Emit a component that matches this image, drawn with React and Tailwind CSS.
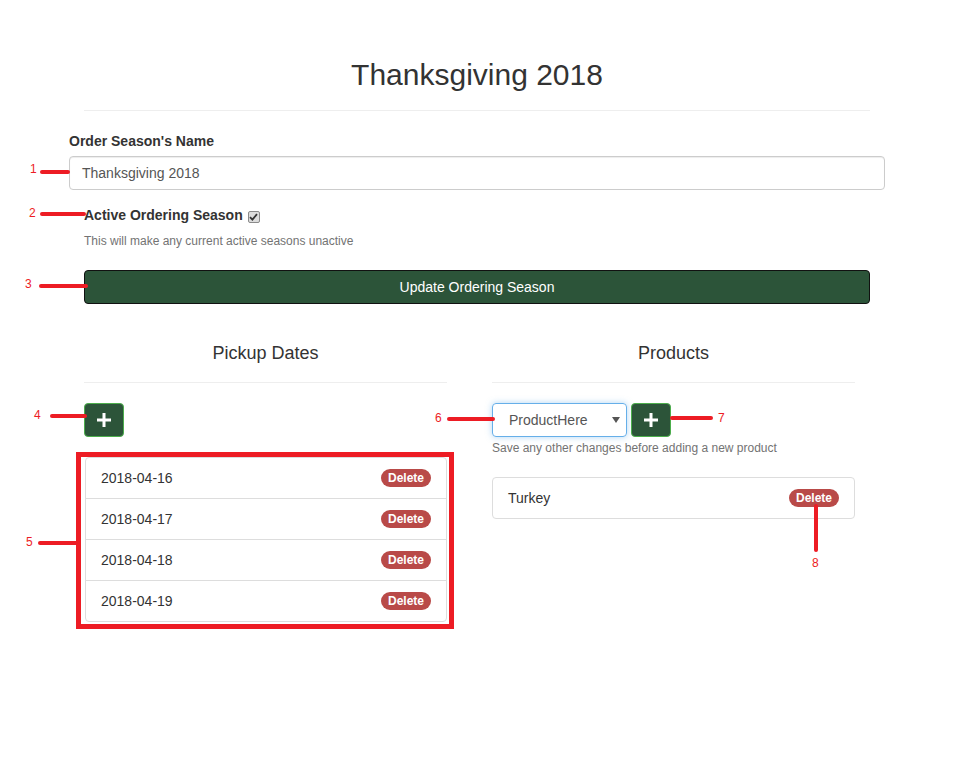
import React from "react";

const dates = ["2018-04-16", "2018-04-17", "2018-04-18", "2018-04-19"];

function PlusIcon() {
  return (
    <svg width="14" height="14" viewBox="0 0 14 14">
      <rect x="5.5" y="0" width="3" height="14" fill="#fff" />
      <rect x="0" y="5.5" width="14" height="3" fill="#fff" />
    </svg>
  );
}

function AddButton() {
  return (
    <button className="w-[40px] h-[34px] rounded-[4px] bg-[#2c5439] border border-[#4cae4c] flex items-center justify-center">
      <PlusIcon />
    </button>
  );
}

function Badge() {
  return (
    <span className="inline-block rounded-[10px] bg-[#b94a48] text-white text-[12px] font-bold leading-[12px] px-[7px] py-[3px]">
      Delete
    </span>
  );
}

function Item({ label, first, last }) {
  return (
    <div
      className={[
        "flex items-center justify-between h-[42px] px-[15px] border border-[#ddd] bg-white -mb-px",
        first ? "rounded-t-[4px]" : "",
        last ? "rounded-b-[4px]" : "",
      ].join(" ")}
    >
      <span className="text-[14px] text-[#333]">{label}</span>
      <Badge />
    </div>
  );
}

// red callout markers drawn over the screenshot
function Num({ n, className }) {
  return (
    <span className={"absolute text-[12px] leading-[12px] text-[#ed1c24] " + className}>
      {n}
    </span>
  );
}

function Line({ className }) {
  return <div className={"absolute bg-[#ed1c24] rounded-full " + className} />;
}

export default function App() {
  return (
    <div
      className="relative w-[974px] h-[760px] bg-white text-[#333] overflow-hidden"
      style={{ fontFamily: '"Liberation Sans", Arial, sans-serif' }}
    >
      <div className="pt-[58px] ml-[84px] w-[786px]">
        <h2 className="text-[30px] leading-[33px] text-center">Thanksgiving 2018</h2>
        <div className="mt-[19px] border-t border-[#eee]" />

        <label className="block mt-[20px] text-[14px] leading-[20px] font-bold -ml-[15px]">
          Order Season's Name
        </label>
        <div className="mt-[5px] -mx-[15px] h-[34px] border border-[#ccc] rounded-[4px] px-[12px] flex items-center text-[14px] text-[#555] shadow-[inset_0_1px_1px_rgba(0,0,0,0.075)]">
          Thanksgiving 2018
        </div>

        <div className="mt-[15px] flex items-center gap-[5px] h-[20px]">
          <span className="text-[14px] font-bold">Active Ordering Season</span>
          <span className="mt-[3px] w-[12px] h-[12px] rounded-[2px] border border-[#8a8a8a] bg-[#dcdcdc] flex items-center justify-center">
            <svg width="9" height="8" viewBox="0 0 9 8">
              <path d="M1 4.2 L3.4 6.6 L8 1.2" stroke="#333" strokeWidth="1.8" fill="none" />
            </svg>
          </span>
        </div>
        <div className="mt-[8px] text-[12px] leading-[17px] text-[#737373]">
          This will make any current active seasons unactive
        </div>

        <button className="mt-[20px] w-full h-[34px] rounded-[4px] bg-[#2c5439] border border-[#111] text-white text-[14px]">
          Update Ordering Season
        </button>

        <div className="mt-[39px] flex gap-[45px]">
          <div className="w-[363px]">
            <h4 className="text-[18px] leading-[20px] text-center">Pickup Dates</h4>
            <div className="mt-[19px] border-t border-[#eee]" />
            <div className="mt-[20px]">
              <AddButton />
            </div>
            <div className="mt-[20px] ml-px">
              {dates.map((d, i) => (
                <Item key={d} label={d} first={i === 0} last={i === dates.length - 1} />
              ))}
            </div>
          </div>

          <div className="w-[363px]">
            <h4 className="text-[18px] leading-[20px] text-center">Products</h4>
            <div className="mt-[19px] border-t border-[#eee]" />
            <div className="mt-[20px] flex gap-[4px]">
              <div className="w-[135px] h-[34px] rounded-[4px] border border-[#66afe9] shadow-[0_0_6px_rgba(102,175,233,0.5)] flex items-center justify-between pl-[16px] pr-[6px] text-[14px] text-[#555]">
                <span>ProductHere</span>
                <svg width="8" height="6" viewBox="0 0 8 6">
                  <path d="M0 0 H8 L4 6 Z" fill="#555" />
                </svg>
              </div>
              <AddButton />
            </div>
            <div className="mt-[3px] text-[12px] leading-[17px] text-[#737373]">
              Save any other changes before adding a new product
            </div>
            <div className="mt-[20px]">
              <Item label="Turkey" first last />
            </div>
          </div>
        </div>
      </div>

      {/* annotations */}
      <div className="absolute left-[76px] top-[452px] w-[378px] h-[177px] border-[5px] border-[#ed1c24]" />

      <Num n="1" className="left-[30px] top-[163px]" />
      <Line className="left-[40px] top-[170px] w-[30px] h-[4px]" />
      <Num n="2" className="left-[29px] top-[207px]" />
      <Line className="left-[40px] top-[212px] w-[46px] h-[4px]" />
      <Num n="3" className="left-[25px] top-[278px]" />
      <Line className="left-[39px] top-[284px] w-[49px] h-[4px]" />
      <Num n="4" className="left-[34px] top-[409px]" />
      <Line className="left-[50px] top-[414px] w-[37px] h-[4px]" />
      <Num n="5" className="left-[26px] top-[536px]" />
      <Line className="left-[38px] top-[541px] w-[40px] h-[4px]" />
      <Num n="6" className="left-[435px] top-[412px]" />
      <Line className="left-[447px] top-[417px] w-[48px] h-[4px]" />
      <Line className="left-[670px] top-[416px] w-[43px] h-[4px]" />
      <Num n="7" className="left-[718px] top-[412px]" />
      <Line className="left-[814px] top-[504px] w-[4px] h-[48px]" />
      <Num n="8" className="left-[812px] top-[557px]" />
    </div>
  );
}
